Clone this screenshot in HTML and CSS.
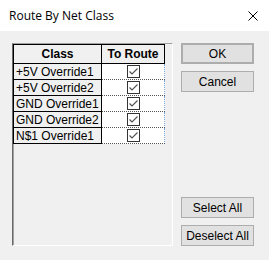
FILE: index.html
```html
<!DOCTYPE html>
<html lang="en">
<head>
  <meta charset="UTF-8" />
  <title>Route By Net Class</title>
  <link rel="stylesheet" href="styles.css">
</head>
<body>
  <div class="window">
    <div class="titlebar">
      <span class="title">Route By Net Class</span>
      <svg class="close" width="10" height="10" viewBox="0 0 10 10">
        <path d="M0.5 0.5 L9.5 9.5 M9.5 0.5 L0.5 9.5" stroke="#000" stroke-width="1" fill="none" />
      </svg>
    </div>

    <div class="content">
      <div class="grid">
        <table class="classes">
          <thead>
            <tr>
              <th class="col-class">Class</th>
              <th class="col-route">To Route</th>
            </tr>
          </thead>
          <tbody id="rows"></tbody>
        </table>
      </div>

      <div class="actions">
        <button class="btn default">OK</button>
        <button class="btn">Cancel</button>
        <button class="btn push-down">Select All</button>
        <button class="btn">Deselect All</button>
      </div>
    </div>
  </div>

  <script>
const netClasses = [
  '+5V Override1',
  '+5V Override2',
  'GND Override1',
  'GND Override2',
  'N$1 Override1'
];

const checkSvg = '<svg class="check" width="13" height="13" viewBox="0 0 13 13">' +
  '<rect x="0.5" y="0.5" width="12" height="12" fill="#fff" stroke="#333" />' +
  '<path d="M2.5 6.5 L5 9 L10.5 3.5" stroke="#555" stroke-width="1.2" fill="none" />' +
  '</svg>';

const rows = document.getElementById('rows');
netClasses.forEach((name, i) => {
  const tr = document.createElement('tr');
  if (i === netClasses.length - 1) tr.className = 'last';
  tr.innerHTML = '<td class="cell-class">' + name + '</td><td class="cell-route">' + checkSvg + '</td>';
  rows.appendChild(tr);
});
  </script>
</body>
</html>
```

FILE: styles.css
```css
* {
  margin: 0; padding: 0; box-sizing: border-box;
}
body {
  background-color: #f0f0f0;
  font-family: "Liberation Sans", Arial, sans-serif;
  width: 269px;
  height: 260px;
  overflow: hidden;
}

.titlebar {
  background-color: #ffffff;
  height: 31px;
  display: flex;
  align-items: center;
  justify-content: space-between;
  padding: 0 11px 0 9px;
}
.title {
  font-family: "Open Sans", "Noto Sans", sans-serif;
  font-size: 12px;
  color: #000;
  margin-top: -1px;
}
.close {
  display: block;
}

.content {
  display: flex;
  gap: 8px;
  padding: 12px 0 0 12px;
}

.grid {
  width: 161px;
  height: 203px;
  border: 1px solid;
  border-color: #a0a0a0 #ffffff #ffffff #696969;
  box-shadow: inset 1px 0 0 #a0a0a0;
  background-color: #f0f0f0;
}

.classes {
  border-collapse: collapse;
  font-size: 12px;
  color: #000;
}
.classes th {
  height: 19px;
  font-weight: bold;
  text-align: center;
  border: 1px solid #000;
  background-color: #f0f0f0;
  padding: 0;
}
.col-class { width: 88px; }
.col-route { width: 63px; }

.classes td {
  height: 16px;
  padding: 0;
}
.cell-class {
  border: 1px solid #000;
  border-top: none;
  padding-left: 2px !important;
  background-color: #f0f0f0;
  white-space: nowrap;
}
.cell-route {
  background-color: #ffffff;
  text-align: center;
  border-bottom: 1px dotted #555;
  border-right: 1px dotted #7aa7d8;
  line-height: 0;
}
.check {
  display: inline-block;
  vertical-align: middle;
  margin-left: 1px;
}

.actions {
  width: 73px;
  height: 203px;
  display: flex;
  flex-direction: column;
  gap: 7px;
}
.btn {
  height: 21px;
  background-color: #e1e1e1;
  border: 1px solid #adadad;
  font-family: "Liberation Sans", Arial, sans-serif;
  font-size: 12px;
  color: #000;
}
.btn.default {
  border: 2px solid #adadad;
}
.btn.push-down {
  margin-top: auto;
}
```
